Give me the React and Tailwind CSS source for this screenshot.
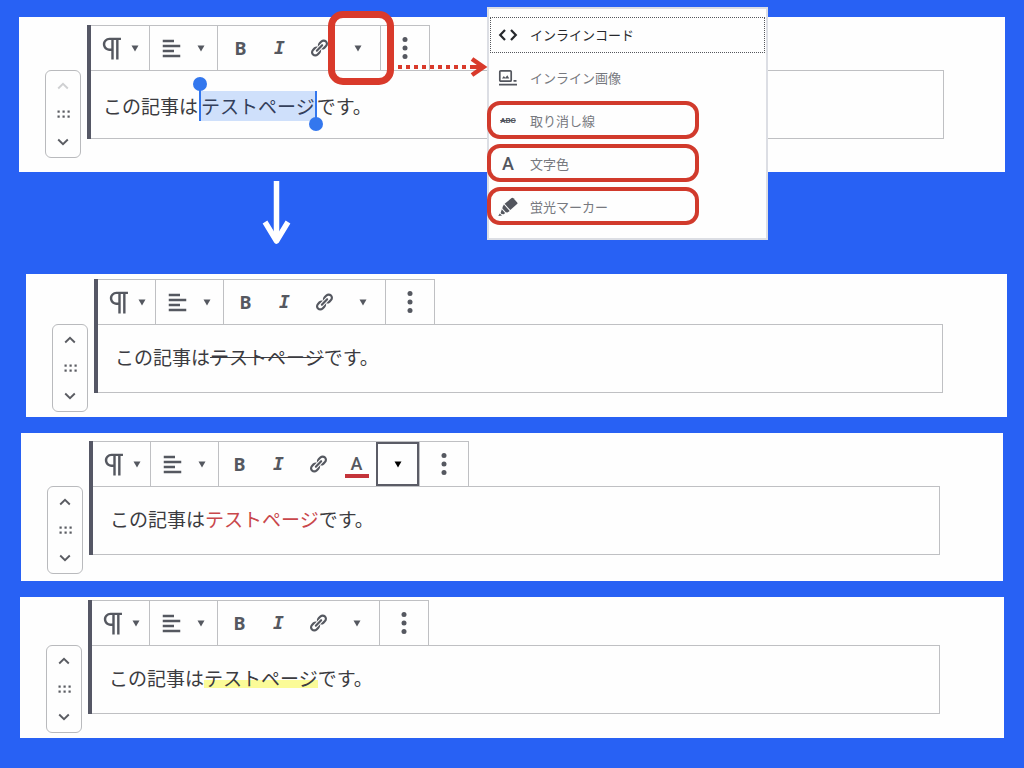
import React from "react";

const PilcrowIcon = () => (
  <svg viewBox="0 0 24 24" className="h-[29px] w-[29px] shrink-0" fill="currentColor" aria-hidden="true">
    <path d="M11 5v7H9.500C7.600 12 6 10.400 6 8.500S7.600 5 9.500 5H11M19 3H9.500C6.500 3 4 5.500 4 8.500S6.500 14 9.500 14H11v7h2V5h2v16h2V5h2V3z" />
  </svg>
);

const AlignIcon = () => (
  <svg viewBox="0 0 20 20" className="h-[25px] w-[25px] shrink-0" fill="currentColor" aria-hidden="true">
    <path d="M12 5V3H3v2h9zm5 4V7H3v2h14zm-5 4v-2H3v2h9zm5 4v-2H3v2h14z" />
  </svg>
);

const LinkIcon = () => (
  <svg viewBox="0 0 20 20" className="h-5 w-5 shrink-0" fill="currentColor" aria-hidden="true">
    <path d="M17.74 2.76c1.68 1.69 1.68 4.41 0 6.1l-1.53 1.52c-1.12 1.12-2.7 1.47-4.14 1.09l2.62-2.61.76-.77.76-.76c.84-.84.84-2.2 0-3.04-.84-.85-2.2-.85-3.04 0l-.77.76-3.38 3.38c-.37-1.44-.02-3.02 1.1-4.14l1.52-1.53c1.69-1.68 4.42-1.68 6.1 0zM8.59 13.43l5.34-5.34c.42-.42.42-1.1 0-1.52-.44-.43-1.13-.39-1.53 0l-5.33 5.34c-.42.42-.42 1.1 0 1.52.44.43 1.13.39 1.52 0zm-.76 2.29l4.14-4.15c.38 1.44.03 3.02-1.09 4.14l-1.52 1.53c-1.69 1.68-4.41 1.68-6.1 0-1.68-1.68-1.68-4.42 0-6.1l1.53-1.52c1.12-1.12 2.7-1.47 4.14-1.1l-4.14 4.15c-.85.84-.85 2.2 0 3.05.84.84 2.2.84 3.04 0z" />
  </svg>
);

const Caret = () => (
  <svg viewBox="0 0 8 7" className="h-[7px] w-2 shrink-0" fill="currentColor" aria-hidden="true">
    <path d="M.5.5h7L4 6.500z" />
  </svg>
);

const DotsIcon = () => (
  <svg viewBox="0 0 6 24" className="h-6 w-[6px] shrink-0" fill="currentColor" aria-hidden="true">
    <circle cx="3" cy="3.500" r="2.500" />
    <circle cx="3" cy="12" r="2.500" />
    <circle cx="3" cy="20.500" r="2.500" />
  </svg>
);

const Chevron = ({ down }) => (
  <svg viewBox="0 0 12 8" className="h-2 w-3" fill="none" stroke="currentColor" strokeWidth="1.900" aria-hidden="true">
    <path d={down ? "M1.200 1.500L6 6.200l4.800-4.700" : "M1.200 6.500L6 1.800l4.800 4.700"} />
  </svg>
);

const GripIcon = () => (
  <svg viewBox="0 0 13 8" className="h-2 w-[13px]" fill="currentColor" aria-hidden="true">
    {[0.5, 5.5, 10.5].map((x) =>
      [0.5, 5.5].map((y) => <rect key={`${x}-${y}`} x={x} y={y} width="2.200" height="2.200" />)
    )}
  </svg>
);

const CodeIcon = () => (
  <svg viewBox="0 0 20 20" className="h-5 w-5" fill="none" stroke="currentColor" strokeWidth="2.200" aria-hidden="true">
    <path d="M7 5L2.200 10 7 15M13 5l4.800 5-4.800 5" />
  </svg>
);

const InlineImageIcon = () => (
  <svg viewBox="0 0 20 20" className="h-5 w-5" fill="none" stroke="currentColor" aria-hidden="true">
    <rect x="1.800" y="2.800" width="11.400" height="10.400" rx="1" strokeWidth="1.700" />
    <path d="M4 10.500l1.800-2.400 1.500 1.600 2-2.400 2 3.200z" fill="currentColor" stroke="none" />
    <path d="M15.500 12.800h3M1 16.600h18" strokeWidth="1.800" />
  </svg>
);

const MarkerIcon = () => (
  <svg viewBox="0 0 20 20" className="h-5 w-5" fill="currentColor" aria-hidden="true">
    <path d="M13.600 1.100q1-.7 1.800.1l3.800 4.200q.7.900-.1 1.700l-6.800 5.900-5.700-6.300z" />
    <path d="M5.900 7.600l5.800 6.500-2.300 1.400-1.600-.2-3.400-3.700.2-1.600z" />
    <path d="M3.800 12.300l3.300 3.600-1.200 1.300-2.400-.1-.9-1.200z" />
    <path d="M1.700 16.500l2.300 2.100-3.700.4z" />
  </svg>
);

const toolButton = "flex h-full items-center justify-center";

function Toolbar({ marked, colored }) {
  return (
    <div className="flex h-[45px] w-fit border-t border-[#bfc0c3] text-[#555860]">
      <button
        aria-label="段落"
        className={`flex items-center gap-1 border-r border-[#bfc0c3] pl-[7px] ${marked ? "w-[59px]" : "w-[58px]"}`}
      >
        <PilcrowIcon />
        <Caret />
      </button>
      <button aria-label="配置" className="flex w-[68px] items-center gap-[13px] border-r border-[#bfc0c3] pl-[9px]">
        <AlignIcon />
        <Caret />
      </button>
      <div className={`flex border-r border-[#bfc0c3] ${marked ? "px-[3px]" : colored ? "pl-px" : "pr-[3px] pl-0.5"}`}>
        <button aria-label="太字" className={`${toolButton} w-[39px] font-['Noto_Sans',sans-serif] text-lg font-bold`}>B</button>
        <button aria-label="イタリック" className={`${toolButton} w-[39px] font-['DejaVu_Sans_Mono',monospace] text-lg font-bold italic`}>I</button>
        <button aria-label="リンク" className={`${toolButton} w-[39px]`}><LinkIcon /></button>
        {colored && (
          <button aria-label="文字色" className={`${toolButton} w-[39px]`}>
            <span className="flex w-6 flex-col items-center border-b-4 border-[#c4343a] pt-1 font-['Roboto',sans-serif] text-lg leading-5 font-medium">A</span>
          </button>
        )}
        <button
          aria-label="その他のリッチテキスト"
          className={`relative ${toolButton} ${colored ? "w-[43px] border-2 border-[#5b5c66] text-black" : "w-[39px]"}`}
        >
          <Caret />
          {marked && (
            <span className="absolute -top-[15px] -right-[17px] -bottom-[15px] -left-[10px] z-10 rounded-[15px] border-[7px] border-[#d93a2b]" />
          )}
        </button>
      </div>
      <button aria-label="詳細設定" className="flex w-[49px] items-center justify-center border-r border-[#bfc0c3]">
        <DotsIcon />
      </button>
    </div>
  );
}

function Mover({ first }) {
  return (
    <div className="mt-[45px] flex h-[88px] w-9 shrink-0 flex-col items-center justify-between rounded-md border border-[#b9babd] py-[11px] text-[#5a5c62]">
      <button aria-label="上に移動" className={first ? "text-[#cfd0d2]" : ""}><Chevron /></button>
      <button aria-label="ドラッグ"><GripIcon /></button>
      <button aria-label="下に移動"><Chevron down /></button>
    </div>
  );
}

function Block({ className, textClass, first, colored, children, overlay }) {
  return (
    <section className={`relative flex gap-[6px] bg-[#fefefe] pl-[26px] ${className}`}>
      <Mover first={first} />
      <div className="h-[114px] min-w-0 flex-1 border-l-4 border-[#555765]">
        <Toolbar marked={first} colored={colored} />
        <div className={`flex h-[69px] items-center border-y border-r border-[#bfc0c3] text-[19px] leading-[30px] whitespace-nowrap text-[#3b3b40] ${textClass}`}>
          <p>{children}</p>
        </div>
      </div>
      {overlay}
    </section>
  );
}

const menuItems = [
  { label: "インラインコード", icon: <CodeIcon />, focused: true },
  { label: "インライン画像", icon: <InlineImageIcon /> },
  {
    label: "取り消し線",
    icon: <span className="font-['Roboto',sans-serif] text-[8px] leading-none font-bold line-through">ABC</span>,
    ringed: true,
  },
  {
    label: "文字色",
    icon: <span className="font-['Roboto',sans-serif] text-lg leading-none font-medium">A</span>,
    ringed: true,
  },
  { label: "蛍光マーカー", icon: <MarkerIcon />, ringed: true },
];

function FormatMenu() {
  return (
    <div className="absolute -top-[10px] left-[468px] flex w-[281px] flex-col gap-[7px] border-2 border-[#dcdee4] bg-[#fefefe] px-px pt-2 pb-[13px]">
      {menuItems.map((item) => (
        <button
          key={item.label}
          className={`relative flex h-9 items-center gap-3 border border-dotted pb-px pl-[7px] text-[13px] ${
            item.focused ? "border-[#55575c] text-[#26282c]" : "border-transparent text-[#77797f]"
          }`}
        >
          <span className={`flex w-5 justify-center ${item.focused ? "" : "text-[#53565e]"}`}>{item.icon}</span>
          {item.label}
          {item.ringed && (
            <span className="absolute -top-[3px] -bottom-px -left-1 w-[212px] rounded-[13px] border-4 border-[#d13a2c]" />
          )}
        </button>
      ))}
    </div>
  );
}

const DottedArrow = () => (
  <svg viewBox="0 0 92 20" className="absolute top-[40px] left-[379px] h-5 w-[92px]" fill="none" stroke="#d93a2b" strokeWidth="4" aria-hidden="true">
    <path d="M0 10h73" strokeDasharray="4 4" />
    <path d="M73 10h13" />
    <path d="M74 2l11.500 8L74 18" strokeWidth="4.500" />
  </svg>
);

export default function App() {
  return (
    <main className="min-h-screen bg-[#2861f4] pt-[17px] pb-7 font-['Noto_Sans_CJK_JP',sans-serif]">
      <Block
        first
        className="mx-[19px] pt-2 pr-[61px] pb-[14px]"
        textClass="pl-3 pt-0.5"
        overlay={
          <>
            <FormatMenu />
            <DottedArrow />
          </>
        }
      >
        この記事は
        <mark className="relative ml-px inline-block bg-[#cfe0fb] px-0.5 text-[#34405c]">
          テストページ
          <span className="absolute -top-[14px] left-[-6px] h-[14px] w-[14px] rounded-full bg-[#3377ee]" />
          <span className="absolute -top-1 bottom-0 left-0 w-[2px] bg-[#3377ee]" />
          <span className="absolute top-0 right-0 -bottom-1 w-[2px] bg-[#3377ee]" />
          <span className="absolute right-[-6px] -bottom-[10px] h-[14px] w-[14px] rounded-full bg-[#3377ee]" />
        </mark>
        です。
      </Block>

      <div className="flex h-[102px] items-start pt-[9px] pl-[262px]">
        <svg viewBox="0 0 30 64" className="h-16 w-[30px]" fill="none" stroke="#fff" strokeWidth="5.500" strokeLinejoin="round" aria-hidden="true">
          <path d="M14.500 0v58" />
          <path d="M3 41l11.500 19L26 41" />
        </svg>
      </div>

      <Block className="mr-[17px] ml-[26px] pt-[5px] pr-16 pb-[5px]" textClass="pl-[17px] pb-[3px]">
        この記事は
        <s className="decoration-1">テストページ</s>
        です。
      </Block>

      <Block colored className="mt-4 mr-[21px] ml-[21px] pt-2 pr-[63px] pb-[7px]" textClass="pl-[17px] pb-[3px]">
        この記事は
        <span className="text-[#c9474b]">テストページ</span>
        です。
      </Block>

      <Block className="mx-5 mt-4 pt-[3px] pr-16 pb-[5px]" textClass="pl-[17px] pb-[3px]">
        この記事は
        <mark className="inline-block bg-transparent bg-[linear-gradient(transparent_60%,#fbfb98_60%)] leading-5 text-inherit">テストページ</mark>
        です。
      </Block>
    </main>
  );
}
